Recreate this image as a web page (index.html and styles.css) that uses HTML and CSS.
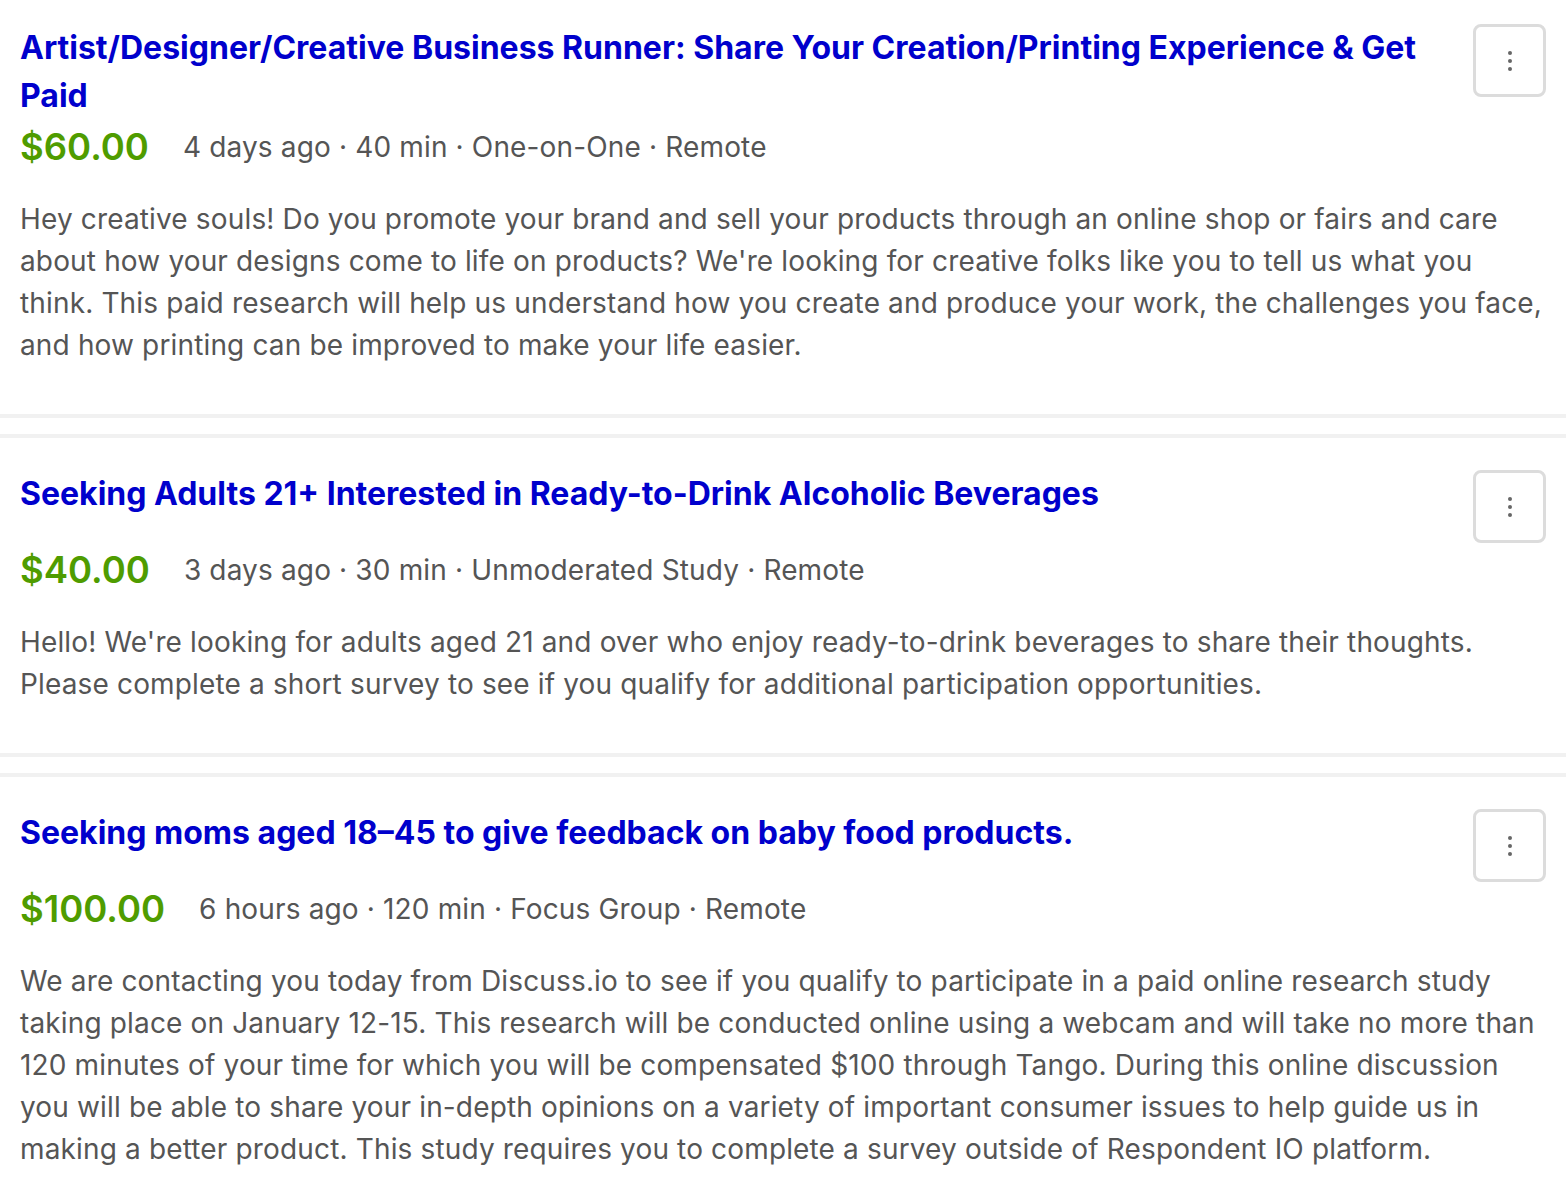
FILE: index.html
```html
<!DOCTYPE html>
<html>
<head>
<meta charset="utf-8">
<link rel="stylesheet" href="styles.css">
</head>
<body>
<div class="list">
  <div class="card">
    <div class="head">
      <a class="title" href="#">Artist/Designer/Creative Business Runner: Share Your Creation/Printing Experience &amp; Get Paid</a>
      <button class="kebab" aria-label="More"><svg width="8" height="24" viewBox="0 0 8 24"><circle cx="4" cy="4" r="2"/><circle cx="4" cy="12" r="2"/><circle cx="4" cy="20" r="2"/></svg></button>
    </div>
    <div class="meta"><span class="price">$60.00</span><span class="info">4 days ago · 40 min · One-on-One · Remote</span></div>
    <p class="desc">Hey creative souls! Do you promote your brand and sell your products through an online shop or fairs and care about how your designs come to life on products? We're looking for creative folks like you to tell us what you think. This paid research will help us understand how you create and produce your work, the challenges you face, and how printing can be improved to make your life easier.</p>
  </div>
  <div class="card">
    <div class="head">
      <a class="title" href="#">Seeking Adults 21+ Interested in Ready-to-Drink Alcoholic Beverages</a>
      <button class="kebab" aria-label="More"><svg width="8" height="24" viewBox="0 0 8 24"><circle cx="4" cy="4" r="2"/><circle cx="4" cy="12" r="2"/><circle cx="4" cy="20" r="2"/></svg></button>
    </div>
    <div class="meta"><span class="price">$40.00</span><span class="info">3 days ago · 30 min · Unmoderated Study · Remote</span></div>
    <p class="desc">Hello! We're looking for adults aged 21 and over who enjoy ready-to-drink beverages to share their thoughts. Please complete a short survey to see if you qualify for additional participation opportunities.</p>
  </div>
  <div class="card">
    <div class="head">
      <a class="title" href="#">Seeking moms aged 18–45 to give feedback on baby food products.</a>
      <button class="kebab" aria-label="More"><svg width="8" height="24" viewBox="0 0 8 24"><circle cx="4" cy="4" r="2"/><circle cx="4" cy="12" r="2"/><circle cx="4" cy="20" r="2"/></svg></button>
    </div>
    <div class="meta"><span class="price">$100.00</span><span class="info">6 hours ago · 120 min · Focus Group · Remote</span></div>
    <p class="desc">We are contacting you today from Discuss.io to see if you qualify to participate in a paid online research study taking place on January 12-15. This research will be conducted online using a webcam and will take no more than 120 minutes of your time for which you will be compensated $100 through Tango. During this online discussion you will be able to share your in-depth opinions on a variety of important consumer issues to help guide us in making a better product. This study requires you to complete a survey outside of Respondent IO platform.</p>
  </div>
</div>
</body>
</html>
```
FILE: styles.css
```css
html, body {
  margin: 0;
  padding: 0;
  background: #fff;
}
body {
  font-family: Inter, "Noto Sans", sans-serif;
  color: #555;
}
.list {
  margin-top: -8px;
}
.card {
  padding: 32px 20px 48px 20px;
  border-bottom: 4px solid #f1f1f1;
}
.card + .card {
  border-top: 4px solid #f1f1f1;
  margin-top: 16px;
}
.head {
  display: flex;
  align-items: flex-start;
  gap: 48px;
}
.title {
  flex: 1;
  font-size: 32px;
  line-height: 48px;
  font-weight: 700;
  color: #0000cc;
  text-decoration: none;
}
.kebab {
  flex: none;
  width: 73px;
  height: 73px;
  box-sizing: border-box;
  border: 3px solid #dcdcdc;
  border-radius: 8px;
  background: #fff;
  display: flex;
  align-items: center;
  justify-content: center;
  padding: 0;
}
.kebab svg {
  fill: #666;
}
.meta {
  display: flex;
  align-items: center;
  gap: 34px;
  height: 54px;
}
.price {
  font-size: 36.5px;
  font-weight: 600;
  color: #4f9c00;
}
.info {
  font-size: 28px;
  letter-spacing: 0.15px;
  color: #555;
}
.desc {
  margin: 24px 0 0 0;
  font-size: 28px;
  letter-spacing: 0.15px;
  line-height: 42px;
  color: #555;
}
```
